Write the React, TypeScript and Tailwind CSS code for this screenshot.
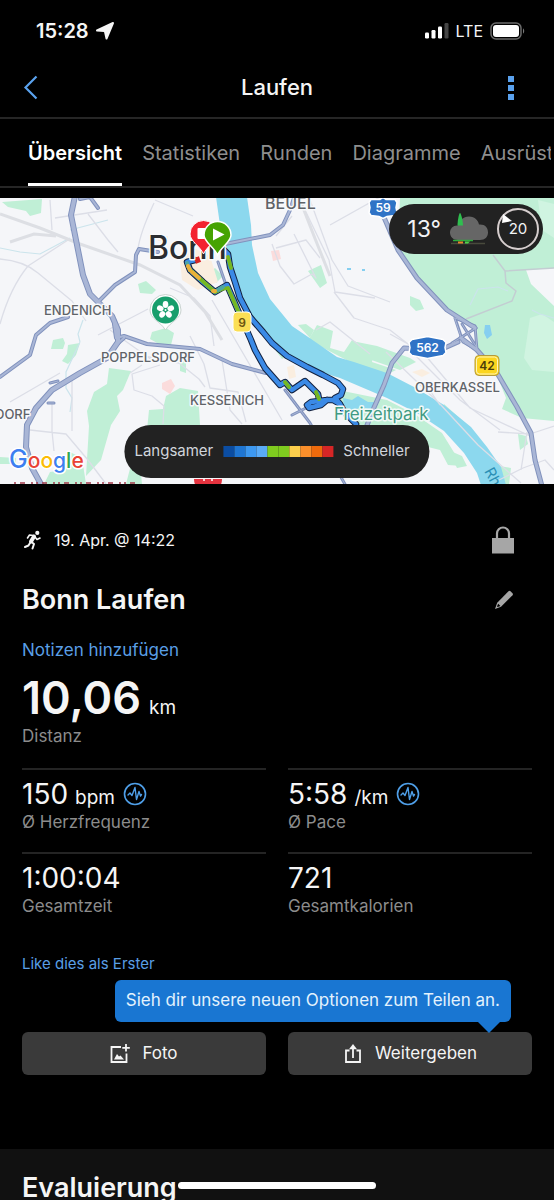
import React from "react";

const tabs = ["Übersicht", "Statistiken", "Runden", "Diagramme", "Ausrüstung"];

const speedColors = [
  "bg-[#0b4da2]",
  "bg-[#1f76d3]",
  "bg-[#3d98f0]",
  "bg-[#5aabf7]",
  "bg-[#7fcb1f]",
  "bg-[#7fcb1f]",
  "bg-[#fdcf4c]",
  "bg-[#fb8f2b]",
  "bg-[#ee6a0c]",
  "bg-[#d62626]",
];

function StatusBar() {
  return (
    <div className="flex h-[62px] items-center justify-between pl-9 pr-7">
      <div className="flex items-center gap-1.5 text-xl font-semibold">
        <span>15:28</span>
        <svg viewBox="0 0 20 20" className="size-5" fill="currentColor" aria-hidden="true">
          <path d="M18 2L11.500 17.500L10 10.800L9.200 10L2 9.500Z" stroke="currentColor" strokeWidth="2" strokeLinejoin="round" />
        </svg>
      </div>
      <div className="flex items-center gap-[7px]">
        <svg viewBox="0 0 24 16" className="h-4 w-6" aria-hidden="true">
          <rect x="0" y="9.500" width="4" height="6" rx="1.200" fill="#fff" />
          <rect x="6.500" y="7" width="4" height="8.500" rx="1.200" fill="#fff" />
          <rect x="13" y="3.500" width="4" height="12" rx="1.200" fill="#fff" />
          <rect x="19.500" y="0" width="4" height="15.500" rx="1.200" fill="#444" />
        </svg>
        <span className="text-base">LTE</span>
        <svg viewBox="0 0 36 18" className="h-[18px] w-9" aria-hidden="true">
          <rect x="1" y="1" width="30" height="16" rx="5" fill="none" stroke="#6b6b6b" strokeWidth="1.500" />
          <rect x="3" y="3" width="26" height="12" rx="3" fill="#fff" />
          <path d="M33 6.500c1.600.6 1.600 4.400 0 5z" fill="#777" />
        </svg>
      </div>
    </div>
  );
}

function Route() {
  const outer =
    "M224 250L228 254L230 267L235 282L240 298L250 317L263 332L272 343L287 356L307 367L323 375L338 383L343 389L341 395L335 398L340 404L345 413L356 424";
  const inner =
    "M340 404L333 400L327 400L311 402L307 405L309 408L321 405L327 400M319 399L318 394L305 381L292 390L285 382L280 385L265 368L255 350L251 340L240 315L227 285L215 292";
  const town = "M215 292L203 282L190 270L187 262L195 260";
  const joined = outer + inner + town;
  return (
    <g fill="none" strokeLinejoin="round" strokeLinecap="round">
      <path d={joined} stroke="#12213f" strokeWidth="6.500" />
      <path d={joined} stroke="#3b8ae6" strokeWidth="4.500" />
      <path d="M228 257L231 268M243 322L228 288L222 289L215 292L190 270M285 382L289 387M316 392L319 399" stroke="#76b821" strokeWidth="3.800" />
      <path d="M223 287L218 290M187 263L188 266" stroke="#4fa7a0" strokeWidth="3.800" />
      <path d="M190 270L188 266M192 272L199 278M213 291L215 291" stroke="#e9b03a" strokeWidth="4" />
      <path d="M195 261l5-2" stroke="#d62626" strokeWidth="6" strokeLinecap="butt" />
    </g>
  );
}

function MapDrawing() {
  return (
    <svg
      viewBox="0 198 554 286"
      preserveAspectRatio="xMidYMid slice"
      className="block h-[286px] w-full"
      fontFamily="Inter, sans-serif"
      role="img"
      aria-label="Karte der Laufstrecke in Bonn"
    >
      <rect x="0" y="198" width="554" height="286" fill="#f5f6f9" />

      <g fill="#c0efd6">
        <path d="M400 198H554V268L526 270L531 284L554 306V421L522 418L502 409L506 398L498 378L478 350L477 328L447 308L417 276L398 246Z" />
        <path d="M2 202L42 199L41 213L30 216L26 211L8 207Z" />
        <path d="M138 284l8-3 10 9-4 4-12-1zM152 332l14-4 8 5-3 12-12-1-9-5zM53 340l10-2 2 5-2 6-12 0zM68 345l12-2-4 12-8 9-6-3 5-7z" />
        <path d="M109 368L131 371L123 390L117 396L120 411L111 425L105 446L101 460L86 476L89 426L87 411L94 392L107 384Z" />
        <path d="M142 484L139 455L146 440L149 410L163 409L166 396L180 388L198 391L200 425L140 430L126 484Z" />
        <path d="M44 484l6-12 14-2 6-18 12 6 4 26zM0 457l16 1v6H0zM206 275l9-7 8 8-7 7zM308 271l13-6 6 18-7 5zM298 325l8-1 8 6-4 8z" />
        <path d="M260 298L280 332L303 350L317 325L333 331L330 348L344 352L352 340L374 350L372 362L396 370L388 374L354 364L314 343L292 328Z" />
        <path d="M343 391L387 400L416 415L442 433L455 454L462 466L448 465L440 450L428 447L412 432L385 430L354 424L338 408Z" />
        <path d="M357 342l20 4 33 12 6 4-16 8-40-14zM410 296l10 4 4 9-8 2-6-6zM180 353h6v20l-6-2zM276 351l8-2 4 6-6 4z" />
        <path d="M444 404l20 18 18 26-3 4-20-26-16-16zM518 434l8 2 2 8-8 6zM448 450l14 6 5 10-10 2zM499 466l12 2-2 16h-8z" />
      </g>
      <path d="M530 318l12-4 12 8v50l-22-2-8-12zM538 200l16 4v34l-12-8z" fill="#d0f4e1" />
      <g fill="#fbdcdc">
        <path d="M162 383l9-4 4 7-5 8-8-5zM271 251l8-1 2 9-8 2z" />
      </g>
      <path d="M180 260l14-12 16 8 8 26-20 8-16-10zM158 236h10v5h-10zM287 367l7-2 2 12-7 2zM412 372l10-3 8 4-8 4z" fill="#faeee0" />

      <path
        d="M216 197L220 225L225 245L236 280L250 314L270 343L285 357L307 368L340 378L387 398L417 413L444 431L464 453L477 473L481 485H506L501 467L487 447L471 427L444 405L414 387L387 373L354 362L337 357L314 341L292 326L270 299L258 273L252 245L251 225L247 197Z"
        fill="#8cd8ee"
      />
      <path d="M343 398l9 2 6-4 10 6 8 0-4 8-12-3-6 4-10-4z" fill="#8cd8ee" />
      <path d="M485 325l5 0 2 10-5 4-3-6zM347 268h4v2h-4zM362 269h3v2h-3z" fill="#86cff0" />

      <g fill="none" stroke="#cbe4ec" strokeWidth="1.200">
        <path d="M0 248l20 4 20 2 30-16M70 230l38-10M83 320l-5 14 2 8M80 342l-14 30 0 16 6 10-2 14M470 305l8-16 20-2 10 4M532 310l8 4 14 4" />
      </g>

      <g fill="none" stroke="#dcdee7" strokeWidth="1.300" strokeLinejoin="round">
        <path d="M50 200l2 30M55 218l52-8M0 324q10-36 28-58l40-26M88 214l20 26 10 12M154 203q-14 30-16 46M0 259q24 2 38 14l34 28 14 20M155 200l38 16M98 335l50-26M110 330l42 30" />
        <path d="M60 373L10 402M52 403v28l2 20M30 430l36 4 22 26 18 24M72 375v56" />
        <path d="M160 365l-28 9 2 16 18 6 12 10-1 18M139 355l40 8 20 16 6 8M130 373l12-8M222 360l8 50 12 14M190 336l14 28 6 24 28 4 8 30M170 288l24 10 16 18 4 30M212 300l70 120" />
        <path d="M272 244l8 22 14 18 18-10 4 4-22-44M276 248l30-8 14 18M292 216l-16 20M330 225l50-28" />
        <path d="M305 210l24 50 6 32 40 6M310 200l22 60 16 26 42 16M334 292l20 26 36 12 36 28M316 330l14-8 40 32M390 334l18 10" />
        <path d="M386 352L440 404L478 445L521 483M410 350L460 400L500 430M440 405l-14-20M425 355L470 408L530 436M498 432l32 2 24-8M499 480l24-12 22-8 9 10M521 470l6-38" />
      </g>
      <g fill="none" stroke="#c3cdd2" strokeWidth="1.500" strokeLinejoin="round">
        <path d="M493 255l12 16 1 12 10 8-4 10-46 18M505 271l49-3" />
      </g>
      <g fill="none" stroke="#dddfe4">
        <path d="M0 214L40 228L80 244L140 265L180 285L205 312L222 340" strokeWidth="3" />
        <path d="M10 242l24-8 22 2M300 200l14 36 16 40" strokeWidth="3" />
      </g>

      {[
        { color: "#8192bd", edge: true },
        { color: "#a9b6d6", edge: false },
      ].map(({ color, edge }) => (
        <g key={color} fill="none" stroke={color} strokeLinejoin="round" strokeLinecap="round">
          <path
            d="M75 196L71 215L76 240L83 275L90 294L98 302L112 316L118 330L118 342L107 358L80 373L52 390L36 408L27 425L26 447L32 468L42 486"
            strokeWidth={edge ? 6 : 4}
          />
          <path d="M383 215L398 250L417 278L447 310L475 328" strokeWidth={edge ? 5 : 3} />
          <path d="M461 338L477 350L497 373L517 407L531 433L535 460L542 486" strokeWidth={edge ? 5 : 3} />
          <path d="M458 342L440 350L404 348L392 363L384 385L372 412L366 428" strokeWidth={edge ? 5 : 3} />
          <path
            d="M80 199L90 197L98 208M98 302L115 285L135 272L136 255L139 249L158 252M215 246L230 243L270 235L283 225L290 210L294 198M68 317L50 323L36 335L30 355L0 377"
            strokeWidth={edge ? 4 : 2}
          />
          <path d="M114 324L116 338L124 336L147 344L200 349L232 364L266 373M116 345L124 338" strokeWidth={edge ? 4 : 2} />
          <path d="M218 262L226 285M285 390L310 423L346 486M292 415L306 408M50 383l8-2M48 403l6 0" strokeWidth={edge ? 3 : 1} />
          <path d="M455 318L475 326L477 350L463 342ZM452 343L476 328M462 324L477 348" strokeWidth={edge ? 3 : 1} />
        </g>
      ))}

      <path d="M14 483h126" stroke="#a23a4a" strokeWidth="1.500" strokeDasharray="2 4 5 6 2 3" />

      <Route />

      <g fontSize="13" fontWeight="500" fill="#5f6368" stroke="#f8f9fb" strokeWidth="3" paintOrder="stroke" strokeLinejoin="round">
        <text x="44" y="315">ENDENICH</text>
        <text x="101" y="362">POPPELSDORF</text>
        <text x="190" y="405">KESSENICH</text>
        <text x="415" y="392">OBERKASSEL</text>
        <text x="-5" y="419">DORF</text>
        <text x="265" y="209" fontSize="16">BEUEL</text>
      </g>
      <text x="334" y="420" fontSize="17" fill="#3f9b83" stroke="#f2faf8" strokeWidth="3" paintOrder="stroke" strokeLinejoin="round">
        Freizeitpark
      </text>
      <text x="484" y="471" fontSize="15" fill="#2b8fb5" transform="rotate(62 484 471)">Rhein</text>
      <text x="148" y="259" fontSize="32" fontWeight="500" fill="#2b2d31" stroke="#f8f9fb" strokeWidth="3" paintOrder="stroke" strokeLinejoin="round">
        Bonn
      </text>

      <g>
        <path d="M190 234a13.500 13.500 0 1 1 27 0c0 7-10 12-13.500 20c-3.500-8-13.500-13-13.500-20z" fill="#f3222f" stroke="#fff" strokeWidth="1" />
        <rect x="197.500" y="228" width="12" height="11" rx="1" fill="#fff" />
        <path d="M204 235a13.500 13.500 0 1 1 27 0c0 7-10 12-13.500 20c-3.500-8-13.500-13-13.500-20z" fill="#46a302" stroke="#fff" strokeWidth="1.500" />
        <path d="M213 228.500l11.500 6-11.500 6z" fill="#fff" />
      </g>

      <g>
        <path d="M150 310a15.500 15.500 0 1 1 31 0c0 9-10 11-15.500 20c-5.500-9-15.500-11-15.500-20z" fill="#fff" stroke="#c9d3d0" />
        <circle cx="165.500" cy="310" r="13.500" fill="#179e6c" />
        {[0, 72, 144, 216, 288].map((a) => (
          <ellipse key={a} cx="165.500" cy="304.500" rx="2.800" ry="3.400" fill="#fff" transform={`rotate(${a} 165.500 310)`} />
        ))}
        <circle cx="165.500" cy="310" r="1" fill="#fff" />
      </g>

      <g fontWeight="600" textAnchor="middle" fontSize="12">
        <rect x="233" y="312" width="18" height="20" rx="4" fill="#fbdf55" stroke="#fff" strokeWidth="1" />
        <text x="242" y="327" fill="#6b5410">9</text>
        <rect x="475" y="355.500" width="24" height="20" rx="4" fill="#fbd51f" stroke="#b59a3a" strokeWidth="1" />
        <rect x="476.500" y="357" width="21" height="17" rx="3" fill="none" stroke="#fff5b8" />
        <text x="487" y="370" fill="#4b3d0a">42</text>
        <path d="M371 199.500h9l3-2 3 2h9l2 3-1 5 1 5-2 3-8 1-4 2-4-2-8-1-2-3 1-5-1-5z" fill="#2f73c6" stroke="#fff" strokeWidth="1.500" />
        <text x="383" y="212" fill="#fff">59</text>
        <path d="M412 339.500l15.500-3 15.500 3 3 3-1 5 1 5-3 3-15.500 3-15.500-3-3-3 1-5-1-5z" fill="#2f73c6" stroke="#fff" strokeWidth="1.500" />
        <text x="427.500" y="352" fill="#fff">562</text>
      </g>

      <path d="M194 479h28a14 14 0 0 1-28 0z" fill="#e5333f" />
      <path d="M204 479v2M212 479v2" stroke="#fff" strokeWidth="1.500" />
      <g fontSize="25" fontWeight="500" stroke="#fff" strokeWidth="3" paintOrder="stroke" strokeLinejoin="round">
        <text x="9" y="468">
          <tspan fill="#3d7ff0">G</tspan>
          <tspan fill="#e94335" fontSize="21">o</tspan>
          <tspan fill="#fbbc05" fontSize="21">o</tspan>
          <tspan fill="#3d7ff0" fontSize="21">g</tspan>
          <tspan fill="#34a853" fontSize="21">l</tspan>
          <tspan fill="#e94335" fontSize="21">e</tspan>
        </text>
      </g>
    </svg>
  );
}

function WeatherBadge() {
  return (
    <div className="absolute right-[11px] top-1.5 flex h-[50px] items-center gap-2 rounded-full bg-[#222] pl-[18px] pr-1">
      <span className="text-[23px] text-gray-100">13°</span>
      <svg viewBox="0 0 40 34" className="h-[34px] w-10" aria-hidden="true">
        <path d="M9 28c-5 0-8-3.500-8-7.500s3.500-7.500 8-7c1-4.500 5-9 11-9 6 0 9.500 4.500 10 8 6-.5 9 3 9 8 0 4.500-3 7.500-8 7.500z" fill="#666" />
        <path d="M11 1c1 0 3 8 3 12.500h-5.500c0-4.500 1.500-12.500 2.500-12.500z" fill="#2fbf4f" />
        <path d="M4 28.500h20" stroke="#2fae3c" strokeWidth="1.500" />
        <path d="M2 31.500h34" stroke="#484a3c" strokeWidth="1.500" />
        <path d="M9 29.500h5v2H9z" fill="#e9852a" />
        <path d="M16 29.500h5l-2 2h-3z" fill="#4fd34a" />
      </svg>
      <div className="relative flex size-[42px] items-center justify-center rounded-full border-2 border-[#d6cece] text-[15px] text-gray-100">
        20
        <svg viewBox="0 0 12 10" className="absolute left-0.5 top-1 h-2.5 w-3" aria-hidden="true">
          <path d="M2 0L11 7L1 9Z" fill="#fff" />
        </svg>
      </div>
    </div>
  );
}

function SpeedLegend() {
  return (
    <div className="absolute bottom-1.5 left-1/2 flex h-[53px] -translate-x-1/2 items-center gap-2.5 rounded-full bg-[#222] pl-2.5 pr-5 text-[15px] text-gray-300">
      <span>Langsamer</span>
      <span className="flex h-[11px]">
        {speedColors.map((c, i) => (
          <span key={i} className={`w-[11px] ${c}`} />
        ))}
      </span>
      <span>Schneller</span>
    </div>
  );
}

function PulseIcon() {
  return (
    <svg viewBox="0 0 24 24" className="size-6" fill="none" stroke="#4f9fe8" strokeLinecap="round" strokeLinejoin="round" aria-hidden="true">
      <circle cx="12" cy="12" r="10.500" strokeWidth="1.600" />
      <path d="M5 13l2-2 2 2.500 3-8 1.500 12 2.500-8 1.500 4.500 1-1.500" strokeWidth="1.400" />
    </svg>
  );
}

type StatProps = { value: string; unit?: string; label: string; pulse?: boolean };

function Stat({ value, unit, label, pulse }: StatProps) {
  return (
    <div className="h-[84px] border-t-2 border-[#242424] pt-2">
      <div className="flex h-8 items-center gap-2">
        <p className="flex items-baseline gap-[7px] text-[28px] leading-8">
          {value}
          {unit && <span className="text-[19px] leading-6">{unit}</span>}
        </p>
        {pulse && <PulseIcon />}
      </div>
      <p className="text-[17px] leading-6 text-[#8c8c8c]">{label}</p>
    </div>
  );
}

export default function App() {
  return (
    <div className="relative flex h-screen flex-col overflow-hidden bg-black font-[Inter,sans-serif] text-[#f5f5f5]">
      <StatusBar />

      <header className="flex h-[57px] items-center justify-between border-b-2 border-[#262626] px-5 pb-1">
        <button type="button" aria-label="Zurück" className="flex w-12 items-center">
          <svg viewBox="0 0 22 26" className="h-[26px] w-[22px]" fill="none" stroke="#5aa2ee" strokeWidth="2.200" aria-hidden="true">
            <path d="M16.500 1.500L5.500 12.500L16.500 23.500" />
          </svg>
        </button>
        <h1 className="text-[22px] font-medium">Laufen</h1>
        <button type="button" aria-label="Mehr" className="flex w-12 justify-end pr-5">
          <svg viewBox="0 0 6 26" className="h-[26px] w-1.5" fill="#5aa2ee" aria-hidden="true">
            <path d="M0 1h6v6H0zM0 10h6v6H0zM0 19h6v6H0z" />
          </svg>
        </button>
      </header>

      <nav className="mr-[3px] flex h-[67px] shrink-0 gap-5 overflow-hidden pl-7 text-xl">
        {tabs.map((t, i) => (
          <a
            key={t}
            href="#"
            className={
              i === 0
                ? "flex items-center border-b-[3px] border-white pt-1 font-semibold text-white"
                : "flex items-center border-b-[3px] border-transparent pt-1 text-[#8e8e8e]"
            }
          >
            {t}
          </a>
        ))}
      </nav>
      <div className="h-0.5 shrink-0 bg-[#262626]" />

      <main className="min-h-0 flex-1 overflow-y-auto pt-2.5 [scrollbar-width:none]">
        <div className="relative">
          <MapDrawing />
          <WeatherBadge />
          <SpeedLegend />
        </div>

        <section className="px-[22px] pt-[38px]">
          <div className="flex h-9 items-center justify-between">
            <div className="flex items-center gap-3 text-base">
              <svg viewBox="0 0 20 20" className="size-5" fill="none" stroke="#f5f5f5" strokeLinecap="round" strokeLinejoin="round" aria-hidden="true">
                <circle cx="15.300" cy="2.900" r="2.100" fill="#f5f5f5" stroke="none" />
                <path d="M12 6.500L9 11.500" strokeWidth="4" />
                <path d="M11.500 5.500L7.500 5L5.500 8M13 7l2 2.500 3-1.500" strokeWidth="1.600" />
                <path d="M9.500 12l2.500 2-1.500 4.500M8.300 12.500L6.500 15.500l-3.500 1.500" strokeWidth="2" />
              </svg>
              <span>19. Apr. @ 14:22</span>
            </div>
            <svg viewBox="0 0 22 28" className="mr-[18px] h-7 w-[22px]" aria-hidden="true">
              <path d="M5 13V7.500a6 6 0 0 1 12 0V13" fill="none" stroke="#a6a6a6" strokeWidth="2.200" />
              <path d="M0 12h22v15.500H0z" fill="#a6a6a6" />
            </svg>
          </div>

          <div className="mt-6 flex h-9 items-center justify-between">
            <h2 className="text-[27px] font-semibold">Bonn Laufen</h2>
            <button type="button" aria-label="Titel bearbeiten" className="mr-[18px]">
              <svg viewBox="0 0 20 20" className="size-5" aria-hidden="true">
                <path d="M14.500 1.200q1-.9 2 0l2 2q.9 1 0 2L7 16.800L1 19L3.200 12.800z" fill="#a6a6a6" />
                <path d="M4.200 13.800l2.200 2.200-2.700 1.100-.7-.7z" fill="#000" />
              </svg>
            </button>
          </div>

          <button type="button" className="mt-5 block text-[17px] leading-6 text-[#5a9fe6]">Notizen hinzufügen</button>

          <p className="mt-3 flex items-baseline gap-2 text-[45px] font-semibold leading-12">
            10,06
            <span className="text-[19px] font-normal leading-6">km</span>
          </p>
          <p className="mt-0.5 text-[17px] leading-6 text-[#8c8c8c]">Distanz</p>

          <div className="mt-5 grid grid-cols-2 gap-x-[22px]">
            <Stat value="150" unit="bpm" label="Ø Herzfrequenz" pulse />
            <Stat value="5:58" unit="/km" label="Ø Pace" pulse />
            <Stat value="1:00:04" label="Gesamtzeit" />
            <Stat value="721" label="Gesamtkalorien" />
          </div>

          <button type="button" className="mt-4 block text-[15px] leading-6 text-[#5a9fe6]">Like dies als Erster</button>

          <div className="relative mt-14 grid grid-cols-2 gap-[22px]">
            <div role="tooltip" className="absolute -top-[52px] right-[21px] z-10 flex h-[42px] items-center rounded-md bg-[#1976d2] px-[11px] text-[17px] whitespace-nowrap text-[#e3f2fd]">
              Sieh dir unsere neuen Optionen zum Teilen an.
              <svg viewBox="0 0 22 11" className="absolute right-[11px] top-full h-[11px] w-[22px]" fill="#1976d2" aria-hidden="true">
                <path d="M0 0H22L11 11Z" />
              </svg>
            </div>
            <button type="button" className="flex h-[43px] items-center justify-center gap-3 rounded-md bg-[#3a3a3a] text-[17px]">
              <svg viewBox="0 0 20 20" className="size-5" fill="none" stroke="currentColor" strokeWidth="1.800" aria-hidden="true">
                <path d="M11 3H1.500V18H16.500V9.500M16 0V7.500M12.300 3.800H19.800" />
                <path d="M4 15.500L7 10L9 12.500L10.500 11.500L14 15.500Z" fill="currentColor" stroke="none" />
              </svg>
              Foto
            </button>
            <button type="button" className="flex h-[43px] items-center justify-center gap-3 rounded-md bg-[#3a3a3a] text-[17px]">
              <svg viewBox="0 0 20 20" className="size-5" fill="none" stroke="currentColor" strokeWidth="1.800" aria-hidden="true">
                <path d="M6.500 6.500H3V18H17V6.500H13.500M10 14V2" />
                <path d="M6 5.200L10 0L14 5.200Z" fill="currentColor" stroke="none" />
              </svg>
              Weitergeben
            </button>
          </div>
        </section>

        <section className="mt-[74px] bg-[#111] px-[22px] pb-10 pt-[21px]">
          <h2 className="text-[27px] font-semibold leading-9">Evaluierung</h2>
        </section>
      </main>

      <div className="absolute bottom-[11px] left-1/2 h-[7px] w-[198px] -translate-x-1/2 rounded-full bg-white" />
    </div>
  );
}
